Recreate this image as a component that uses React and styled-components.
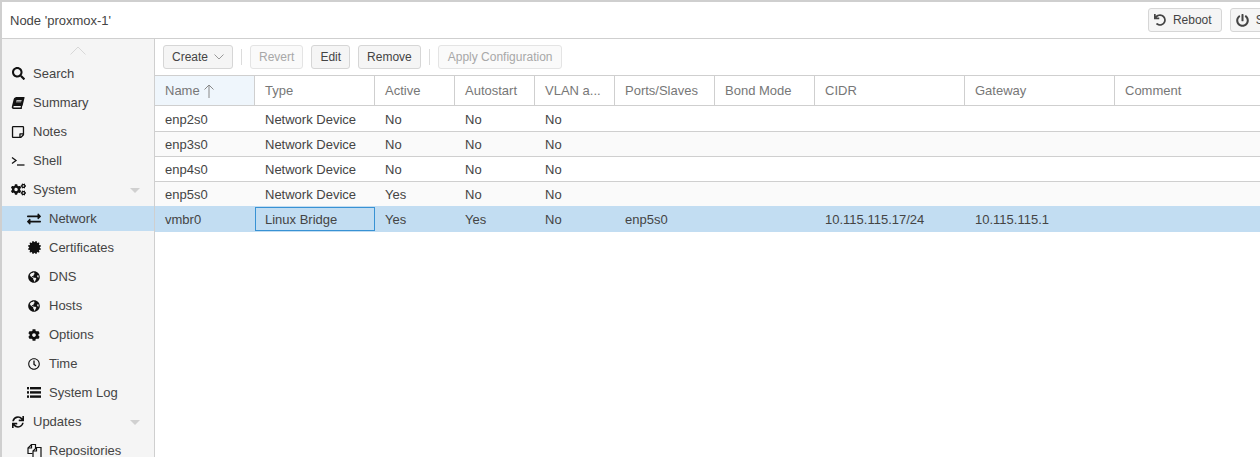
import styled, { createGlobalStyle } from "styled-components";
import {
  FaSearch,
  FaBook,
  FaRegStickyNote,
  FaCogs,
  FaExchangeAlt,
  FaCertificate,
  FaGlobeAmericas,
  FaCog,
  FaRegClock,
  FaSync,
  FaUndo,
  FaPowerOff,
} from "react-icons/fa";

const columns = [
  { label: "Name", width: 100 },
  { label: "Type", width: 120 },
  { label: "Active", width: 80 },
  { label: "Autostart", width: 80 },
  { label: "VLAN a...", width: 80 },
  { label: "Ports/Slaves", width: 100 },
  { label: "Bond Mode", width: 100 },
  { label: "CIDR", width: 150 },
  { label: "Gateway", width: 150 },
  { label: "Comment", width: 145 },
];

const rows = [
  ["enp2s0", "Network Device", "No", "No", "No", "", "", "", "", ""],
  ["enp3s0", "Network Device", "No", "No", "No", "", "", "", "", ""],
  ["enp4s0", "Network Device", "No", "No", "No", "", "", "", "", ""],
  ["enp5s0", "Network Device", "Yes", "No", "No", "", "", "", "", ""],
  ["vmbr0", "Linux Bridge", "Yes", "Yes", "No", "enp5s0", "", "10.115.115.17/24", "10.115.115.1", ""],
];

const SlantedBook = styled(FaBook)`
  transform: skewX(-14deg);
`;

const Terminal = () => (
  <svg width="14" height="10" viewBox="0 0 14 10" fill="none" stroke="#111" strokeWidth="1.3">
    <path d="M1 1.5 L5 4.5 L1 7.5" />
    <path d="M6 9 H13.5" />
  </svg>
);

// two overlapping pages, the font's files-o glyph
const Files = () => (
  <svg width="15" height="15" viewBox="0 0 15 15" fill="none" stroke="#111" strokeWidth="1.2">
    <path d="M5.5 10.5 H1 V5 L4.5 1.5 H8.5 V5" />
    <path d="M4.5 1.5 V5 H1" />
    <path d="M6 14.5 V8 L9.5 4.5 H14 V14.5" />
    <path d="M9.5 4.5 V8 H6" />
  </svg>
);

const ListLines = () => (
  <svg width="14" height="11" viewBox="0 0 14 11" fill="#111">
    <rect x="0" y="0" width="2" height="2.4" />
    <rect x="3" y="0" width="11" height="2.4" />
    <rect x="0" y="4.2" width="2" height="2.4" />
    <rect x="3" y="4.2" width="11" height="2.4" />
    <rect x="0" y="8.4" width="2" height="2.4" />
    <rect x="3" y="8.4" width="11" height="2.4" />
  </svg>
);

const menu = [
  { label: "Search", icon: <FaSearch size={13} /> },
  { label: "Summary", icon: <SlantedBook size={12} /> },
  { label: "Notes", icon: <FaRegStickyNote size={14} /> },
  { label: "Shell", icon: <Terminal /> },
  { label: "System", icon: <FaCogs size={15} />, group: true },
  { label: "Network", icon: <FaExchangeAlt size={14} />, sub: true, active: true },
  { label: "Certificates", icon: <FaCertificate size={13} />, sub: true },
  { label: "DNS", icon: <FaGlobeAmericas size={12} />, sub: true },
  { label: "Hosts", icon: <FaGlobeAmericas size={12} />, sub: true },
  { label: "Options", icon: <FaCog size={12} />, sub: true },
  { label: "Time", icon: <FaRegClock size={12} />, sub: true },
  { label: "System Log", icon: <ListLines />, sub: true },
  { label: "Updates", icon: <FaSync size={12} />, group: true },
  { label: "Repositories", icon: <Files />, sub: true },
];

const App = () => {
  return (
    <Page>
      <GlobalStyle />
      <Header>
        <Title>Node 'proxmox-1'</Title>
        <HeaderActions>
          <HeaderButton>
            <FaUndo size={12} color="#444" />
            Reboot
          </HeaderButton>
          <HeaderButton>
            <FaPowerOff size={13} color="#444" />
            Shutdown
          </HeaderButton>
        </HeaderActions>
      </Header>
      <Body>
        <Sidebar>
          <ScrollUp>
            <svg width="16" height="9" viewBox="0 0 16 9" fill="none" stroke="#d8d8d8">
              <path d="M0.5 8.5 L8 1 L15.5 8.5" />
            </svg>
          </ScrollUp>
          {menu.map((item) => (
            <MenuItem key={item.label} $sub={item.sub} $active={item.active}>
              <MenuIcon>{item.icon}</MenuIcon>
              <span>{item.label}</span>
              {item.group && <Caret />}
            </MenuItem>
          ))}
        </Sidebar>
        <Main>
          <Toolbar>
            <ToolButton $gap={6}>
              Create
              <svg width="10" height="6" viewBox="0 0 10 6" fill="none" stroke="#999">
                <path d="M0.5 0.5 L5 5 L9.5 0.5" />
              </svg>
            </ToolButton>
            <Separator />
            <ToolButton disabled>Revert</ToolButton>
            <ToolButton>Edit</ToolButton>
            <ToolButton>Remove</ToolButton>
            <Separator />
            <ToolButton disabled $pad={9}>
              Apply Configuration
            </ToolButton>
          </Toolbar>
          <HeadRow>
            {columns.map((col, i) => (
              <HeadCell key={col.label} $width={col.width} $sorted={i === 0}>
                {col.label}
                {i === 0 && (
                  <svg width="10" height="14" viewBox="0 0 10 14" fill="none" stroke="#888">
                    <path d="M5 14 V1 M0.5 5.5 L5 1 L9.5 5.5" />
                  </svg>
                )}
              </HeadCell>
            ))}
          </HeadRow>
          {rows.map((row, r) => {
            const selected = r === rows.length - 1;
            return (
              <Row key={row[0]} $selected={selected} $alt={r % 2 === 1}>
                {row.map((value, c) => (
                  <Cell
                    key={columns[c].label}
                    $width={columns[c].width}
                    $focused={selected && c === 1}
                  >
                    {value}
                  </Cell>
                ))}
              </Row>
            );
          })}
        </Main>
      </Body>
    </Page>
  );
};
export default App;

const GlobalStyle = createGlobalStyle`
  html, body {
    margin: 0;
    height: 100%;
    overflow: hidden;
    background: #fff;
  }
  body {
    font-family: "Liberation Sans", Arial, sans-serif;
    font-size: 13px;
    color: #444;
  }
`;

const Page = styled.div`
  width: 1260px;
  height: 457px;
  overflow: hidden;
  box-sizing: border-box;
  border-top: 2px solid #cfcfcf;
  border-left: 2px solid #cfcfcf;
  display: flex;
  flex-direction: column;
`;

const Header = styled.div`
  height: 36px;
  flex: none;
  border-bottom: 1px solid #cfcfcf;
  display: flex;
  align-items: center;
  justify-content: space-between;
  padding-left: 8px;
`;

const Title = styled.div`
  font-size: 13px;
  color: #444;
`;

const HeaderActions = styled.div`
  display: flex;
  gap: 8px;
  margin-right: -59px;
  flex: none;
`;

const HeaderButton = styled.div`
  height: 24px;
  box-sizing: border-box;
  padding: 0 9px 0 5px;
  display: flex;
  align-items: center;
  gap: 7px;
  background: #f5f5f5;
  border: 1px solid #d6d6d6;
  border-radius: 3px;
  font-size: 12px;
  color: #444;
`;

const Body = styled.div`
  flex: 1;
  display: flex;
  min-height: 0;
`;

const Sidebar = styled.div`
  width: 153px;
  flex: none;
  box-sizing: border-box;
  background: #f5f5f5;
  border-right: 1px solid #cfcfcf;
  display: flex;
  flex-direction: column;
  gap: 4px;
`;

const ScrollUp = styled.div`
  height: 18px;
  flex: none;
  box-sizing: border-box;
  padding-top: 4px;
  display: flex;
  align-items: center;
  justify-content: center;
`;

const MenuItem = styled.div`
  height: 25px;
  flex: none;
  display: flex;
  align-items: center;
  padding-left: ${(props) => (props.$sub ? "24px" : "8px")};
  background: ${(props) => (props.$active ? "#c2ddf2" : "transparent")};
  color: #444;
  font-size: 13px;
  position: relative;
`;

const MenuIcon = styled.span`
  width: 16px;
  margin-right: 7px;
  display: flex;
  align-items: center;
  justify-content: center;
  color: #111;
`;

const Caret = styled.i`
  position: absolute;
  right: 14px;
  top: 11px;
  width: 0;
  height: 0;
  border-left: 5px solid transparent;
  border-right: 5px solid transparent;
  border-top: 5px solid #d0d0d0;
`;

const Main = styled.div`
  flex: 1;
  min-width: 0;
`;

const Toolbar = styled.div`
  height: 36px;
  box-sizing: border-box;
  padding: 0 8px;
  display: flex;
  align-items: center;
  gap: 8px;
`;

const ToolButton = styled.div`
  height: 24px;
  box-sizing: border-box;
  padding: 0 ${(props) => props.$pad || 8}px;
  display: flex;
  align-items: center;
  gap: ${(props) => props.$gap || 8}px;
  border: 1px solid ${(props) => (props.disabled ? "#e4e4e4" : "#d6d6d6")};
  border-radius: 3px;
  background: ${(props) => (props.disabled ? "#fafafa" : "#f5f5f5")};
  color: ${(props) => (props.disabled ? "#a8a8a8" : "#444")};
  font-size: 12px;
`;

const Separator = styled.div`
  width: 1px;
  height: 16px;
  background: #dcdcdc;
`;

const HeadRow = styled.div`
  display: flex;
  height: 31px;
  margin-bottom: 1px;
  box-sizing: border-box;
  border-top: 1px solid #cfcfcf;
  border-bottom: 1px solid #cfcfcf;
`;

const HeadCell = styled.div`
  width: ${(props) => props.$width}px;
  flex: none;
  box-sizing: border-box;
  padding-left: 10px;
  display: flex;
  align-items: center;
  gap: 4px;
  color: #777;
  font-size: 13px;
  border-right: 1px solid #cfcfcf;
  background: ${(props) => (props.$sorted ? "#eff6fc" : "#fff")};
  &:last-child {
    border-right: 0;
  }
`;

const Row = styled.div`
  display: flex;
  height: ${(props) => (props.$selected ? 26 : 25)}px;
  margin-top: ${(props) => (props.$selected ? -1 : 0)}px;
  box-sizing: border-box;
  border-bottom: 1px solid ${(props) => (props.$selected ? "#c2ddf2" : "#cfcfcf")};
  padding-top: ${(props) => (props.$selected ? 1 : 0)}px;
  background: ${(props) =>
    props.$selected ? "#c2ddf2" : props.$alt ? "#fafafa" : "#fff"};
`;

const Cell = styled.div`
  width: ${(props) => props.$width}px;
  flex: none;
  box-sizing: border-box;
  display: flex;
  align-items: center;
  color: #444;
  font-size: 13px;
  border: ${(props) => (props.$focused ? "1px solid #3892d4" : "0")};
  padding-left: ${(props) => (props.$focused ? "9px" : "10px")};
`;
